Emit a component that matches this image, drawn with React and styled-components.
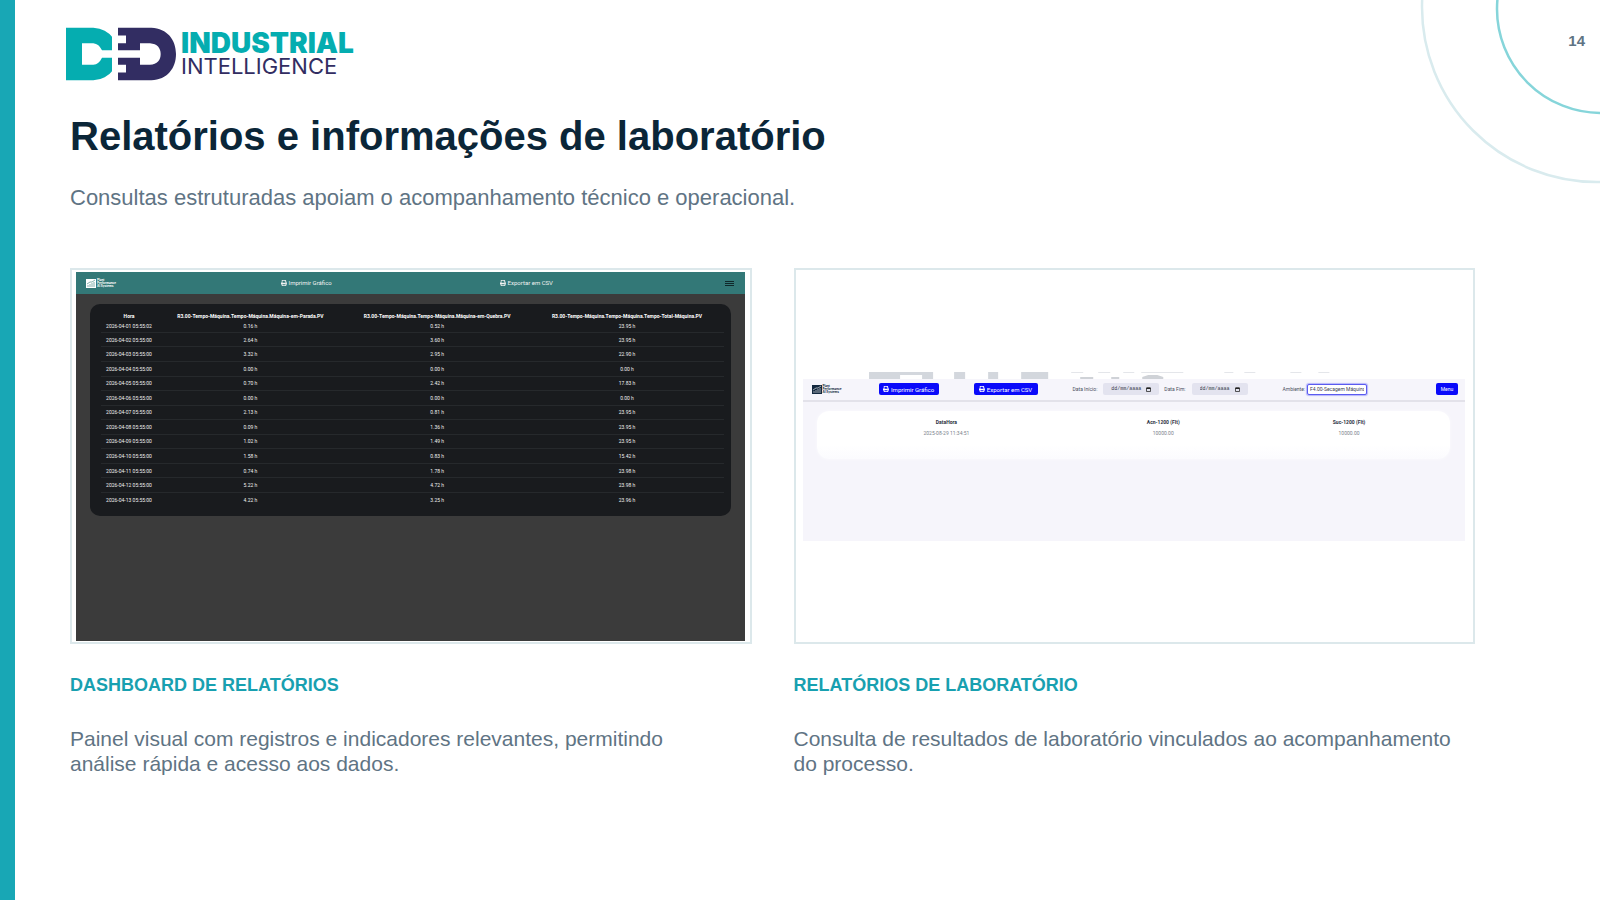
import React from "react"
import styled, { createGlobalStyle } from "styled-components";
import { FaPrint } from "react-icons/fa";

const GlobalStyle = createGlobalStyle`
  * {
    box-sizing: border-box;
  }
  body {
    margin: 0;
    background: #ffffff;
    font-family: "Liberation Sans", Arial, sans-serif;
  }
`;

const Slide = styled.main`
  position: relative;
  min-height: 100vh;
  overflow: hidden;
  border-left: 15px solid #18a7b5;
  padding: 24px 125px 40px 55px;
`;

const Rings = styled.svg`
  position: absolute;
  top: 0;
  right: 0;
  width: 184px;
  height: 188px;
`;

const PageNumber = styled.span`
  position: absolute;
  top: 32px;
  right: 15px;
  font-size: 15px;
  line-height: 18px;
  font-weight: 700;
  color: #5f7484;
`;

const Brand = styled.div`
  display: flex;
  align-items: center;
  height: 60px;
  margin-left: -4px;
  gap: 5px;
`;

const BrandMark = styled.svg`
  width: 110px;
  height: 54px;
`;

const BrandName = styled.div`
  display: flex;
  flex-direction: column;
  padding-top: 2px;
  font-family: Inter, sans-serif;
`;

const BrandTop = styled.span`
  font-size: 28px;
  line-height: 22px;
  font-weight: 900;
  color: #05adb0;
`;

const BrandBottom = styled.span`
  font-size: 22px;
  line-height: 24px;
  font-weight: 400;
  color: #322d62;
`;

const Title = styled.h1`
  margin: 28px 0 0;
  font-size: 40px;
  line-height: 48px;
  font-weight: 700;
  color: #0b2638;
`;

const Subtitle = styled.p`
  margin: 24px 0 0;
  font-size: 22px;
  line-height: 28px;
  color: #5f7484;
`;

const Cards = styled.div`
  display: grid;
  grid-template-columns: 1fr 1fr;
  gap: 42px;
  margin-top: 56px;
`;

const Frame = styled.div`
  display: flex;
  flex-direction: column;
  justify-content: center;
  height: 376px;
  padding: ${({ $inset }) => $inset};
  border: 2px solid #dce8eb;
  background: #ffffff;
`;

const CardTitle = styled.h2`
  margin: 30px 0 0;
  font-size: 18px;
  line-height: 22px;
  font-weight: 700;
  color: #18a0b0;
`;

const CardText = styled.p`
  margin: 30px 0 0;
  padding-right: 20px;
  font-size: 21px;
  line-height: 25px;
  color: #5f7484;
`;

/* dark dashboard */

const DarkScreen = styled.div`
  flex: 1;
  background: #3b3b3b;
  color: #f1f1f1;
  font-family: Roboto, sans-serif;
`;

const DarkBar = styled.div`
  display: grid;
  grid-template-columns: 17% 34% 34% 1fr;
  align-items: center;
  height: 22px;
  padding: 0 11px 0 10px;
  background: #337877;
`;

const DarkAction = styled.button`
  display: flex;
  align-items: center;
  justify-content: center;
  gap: 2px;
  padding: 0;
  border: 0;
  background: none;
  color: #f1f1f1;
  font-family: Roboto, sans-serif;
  font-size: 6px;
  line-height: 8px;
`;

const MenuButton = styled.button`
  display: flex;
  justify-self: end;
  padding: 0;
  border: 0;
  background: none;
`;

const DarkPanel = styled.div`
  margin: 10px 14px 0;
  padding: 7px 7px 9px 11px;
  border-radius: 10px;
  background: #191b1e;
`;

const DarkTable = styled.table`
  width: 100%;
  height: 196px;
  table-layout: fixed;
  border-collapse: collapse;
  font-size: 5px;
  line-height: 6px;
  text-align: center;

  th {
    height: 9px;
    padding: 0;
    font-weight: 700;
    color: #ffffff;
    white-space: nowrap;
  }
  td {
    height: 14px;
    padding: 0;
    border-bottom: 1px solid #26292c;
  }
  tr:first-child td {
    height: 12px;
  }
  tr:last-child td {
    border-bottom: 0;
  }
`;

/* light laboratory screen */

const LightScreen = styled.div`
  height: 162px;
  background: #f6f5fb;
  color: #4a5060;
  font-family: Roboto, sans-serif;
`;

const Remnant = styled.svg`
  display: block;
  width: 100%;
  height: 7px;
  background: #ffffff;
`;

const LightBar = styled.div`
  display: flex;
  align-items: center;
  height: 23px;
  padding: 0 7px 0 9px;
  border-bottom: 2px solid #e3e2ea;
`;

const Spacer = styled.div`
  flex: ${({ $grow }) => $grow};
`;

const BlueButton = styled.button`
  display: flex;
  align-items: center;
  justify-content: center;
  gap: 2px;
  width: ${({ $width }) => $width};
  height: 12px;
  padding: 0;
  border: 0;
  border-radius: 2px;
  background: #0a0afa;
  color: #ffffff;
  font-family: Roboto, sans-serif;
  font-size: ${({ $size }) => $size};
  white-space: nowrap;
`;

const Field = styled.label`
  display: flex;
  align-items: center;
  gap: ${({ $gap }) => $gap};
  font-size: 5px;
  white-space: nowrap;
`;

const DateBox = styled.span`
  display: flex;
  align-items: center;
  width: 56px;
  height: 12px;
  padding: 0 8px;
  border-radius: 2px;
  background: #e3e3ef;
`;

const DateInput = styled.input`
  flex: 1;
  min-width: 0;
  padding: 0;
  border: 0;
  background: none;
  color: #3c4250;
  font-family: "Liberation Mono", monospace;
  font-size: 5px;
`;

const RoomInput = styled.input`
  width: 60px;
  height: 11px;
  padding: 0 2px;
  border: 1px solid #5b5bf0;
  border-radius: 2px;
  box-shadow: 0 0 1px 1px #b5b5fa;
  background: #ffffff;
  color: #3c4250;
  font-family: Roboto, sans-serif;
  font-size: 5px;
`;

const LightPanel = styled.div`
  height: 48px;
  margin: 9px 15px 0 14px;
  padding: 6px 8px 0 6px;
  border-radius: 12px;
  background: linear-gradient(#ffffff 70%, #fbfbfe);
  box-shadow: 0 0 3px #fbfbfe;
`;

const LightTable = styled.table`
  width: 100%;
  table-layout: fixed;
  border-collapse: collapse;
  font-size: 5px;
  line-height: 6px;
  text-align: center;

  th,
  td {
    height: 11px;
    padding: 0;
  }
  th {
    font-weight: 700;
    color: #2b3040;
  }
  td {
    color: #7a7f8c;
  }
`;

const PlantLogoBox = styled.div`
  display: flex;
  align-items: center;
  gap: 1px;
  color: ${({ $color }) => $color};
  font-family: Inter, sans-serif;
  font-size: 3px;
  line-height: 3px;
  font-weight: 700;
`;

const columns = [
  "Hora",
  "R3.00-Tempo-Máquina.Tempo-Máquina.Máquina-em-Parada.PV",
  "R3.00-Tempo-Máquina.Tempo-Máquina.Máquina-em-Quebra.PV",
  "R3.00-Tempo-Máquina.Tempo-Máquina.Tempo-Total-Máquina.PV",
];

const rows = [
  ["2026-04-01 05:55:02", "0.16 h", "0.52 h", "23.95 h"],
  ["2026-04-02 05:55:00", "2.64 h", "3.60 h", "23.95 h"],
  ["2026-04-03 05:55:00", "3.32 h", "2.95 h", "22.90 h"],
  ["2026-04-04 05:55:00", "0.00 h", "0.00 h", "0.00 h"],
  ["2026-04-05 05:55:00", "0.70 h", "2.42 h", "17.83 h"],
  ["2026-04-06 05:55:00", "0.00 h", "0.00 h", "0.00 h"],
  ["2026-04-07 05:55:00", "2.13 h", "0.81 h", "23.95 h"],
  ["2026-04-08 05:55:00", "0.09 h", "1.36 h", "23.95 h"],
  ["2026-04-09 05:55:00", "1.02 h", "1.49 h", "23.95 h"],
  ["2026-04-10 05:55:00", "1.58 h", "0.83 h", "15.42 h"],
  ["2026-04-11 05:55:00", "0.74 h", "1.78 h", "23.98 h"],
  ["2026-04-12 05:55:00", "5.22 h", "4.72 h", "23.98 h"],
  ["2026-04-13 05:55:00", "4.22 h", "3.25 h", "23.96 h"],
];

const PlantLogo = ({ color, ink }) => (
  <PlantLogoBox $color={color}>
    <svg width="10" height="9" viewBox="0 0 10 9">
      <rect width="10" height="9" fill={color} />
      <path d="M2 8V6M4 8V5M6 8V4M8 8V3M1 5L4 3L6 3L9 1" stroke={ink} strokeWidth="0.6" fill="none" />
    </svg>
    <span>Plant<br />Performance<br />AI Systems</span>
  </PlantLogoBox>
);

const CalendarIcon = () => (
  <svg width="5" height="5" viewBox="0 0 10 10">
    <path d="M1 2H9V9H1Z" fill="none" stroke="#222" strokeWidth="1.5" />
    <path d="M1 1H9V4H1Z" fill="#222" />
  </svg>
);

const DashboardScreen = () => (
  <DarkScreen>
    <DarkBar>
      <PlantLogo color="#ffffff" ink="#337877" />
      <DarkAction type="button"><FaPrint />Imprimir Gráfico</DarkAction>
      <DarkAction type="button"><FaPrint />Exportar em CSV</DarkAction>
      <MenuButton type="button" aria-label="Menu">
        <svg width="9" height="5" viewBox="0 0 9 5">
          <path d="M0 0.5H9M0 2.5H9M0 4.5H9" stroke="#10282a" />
        </svg>
      </MenuButton>
    </DarkBar>
    <DarkPanel>
      <DarkTable>
        <colgroup>
          <col width="9%" />
          <col width="30%" />
          <col width="30%" />
          <col width="31%" />
        </colgroup>
        <thead>
          <tr>{columns.map((name) => <th key={name}>{name}</th>)}</tr>
        </thead>
        <tbody>
          {rows.map((row) => (
            <tr key={row[0]}>{row.map((cell, i) => <td key={i}>{cell}</td>)}</tr>
          ))}
        </tbody>
      </DarkTable>
    </DarkPanel>
  </DarkScreen>
);

const LaboratoryScreen = () => (
  <>
    <Remnant viewBox="0 0 662 7" preserveAspectRatio="none">
      <path d="M66 0H130V7H119V3H97V7H66ZM151 0H162V7H151ZM185 0H195V7H185ZM218 0H245V7H218Z" fill="#d3d7dd" />
      <path d="M268 0H280V1H268ZM295 0H307V1H295ZM320 0H331V1H320ZM338 0H380V1H338ZM421 0H430V1H421ZM441 0H452V1H441ZM487 0H498V1H487ZM515 0H526V1H515Z" fill="#e4e6ea" />
      <path d="M277 5H290V7H277ZM308 5H316V7H308ZM339 5L345 3H354L360 5V7H339Z" fill="#cfd2d7" />
    </Remnant>
    <LightScreen>
      <LightBar>
        <PlantLogo color="#14293f" ink="#ffffff" />
        <Spacer $grow={37} />
        <BlueButton type="button" $width="60px" $size="6px"><FaPrint />Imprimir Gráfico</BlueButton>
        <Spacer $grow={35} />
        <BlueButton type="button" $width="64px" $size="6px"><FaPrint />Exportar em CSV</BlueButton>
        <Spacer $grow={35} />
        <Field $gap="6px">
          Data Início:
          <DateBox><DateInput defaultValue="dd/mm/aaaa" /><CalendarIcon /></DateBox>
        </Field>
        <Spacer $grow={5} />
        <Field $gap="6px">
          Data Fim:
          <DateBox><DateInput defaultValue="dd/mm/aaaa" /><CalendarIcon /></DateBox>
        </Field>
        <Spacer $grow={35} />
        <Field $gap="2px">
          Ambiente:
          <RoomInput defaultValue="F4.00-Secagem Máquina" />
        </Field>
        <Spacer $grow={69} />
        <BlueButton type="button" $width="22px" $size="5px">Menu</BlueButton>
      </LightBar>
      <LightPanel>
        <LightTable>
          <colgroup>
            <col width="40%" />
            <col width="30%" />
            <col width="30%" />
          </colgroup>
          <thead>
            <tr>
              <th>DataHora</th>
              <th>Acn-1200 (FIt)</th>
              <th>Suc-1200 (FIt)</th>
            </tr>
          </thead>
          <tbody>
            <tr>
              <td>2025-08-29 11:34:51</td>
              <td>10000.00</td>
              <td>10000.00</td>
            </tr>
          </tbody>
        </LightTable>
      </LightPanel>
    </LightScreen>
  </>
);

const App = () => {
  return (
    <>
      <GlobalStyle />
      <Slide>
        <Rings viewBox="0 0 184 188" fill="none">
          <circle cx="181" cy="7" r="175" stroke="#d9ebee" strokeWidth="2.5" />
          <circle cx="185" cy="9" r="104" stroke="#86d5da" strokeWidth="2.5" />
        </Rings>
        <PageNumber>14</PageNumber>
        <Brand>
          <BrandMark viewBox="48 38 330 160" preserveAspectRatio="none">
            <path d="M48 40H130Q150 41 164 49Q180 58 186 67V107H156Q147 88 130 86H96V150H130Q147 148 156 129H186V169Q180 178 164 187Q150 195 130 196H48Z" fill="#05adb0" />
            <path d="M204 40H304C352 42 378 76 378 118C378 160 352 194 304 196H204V173H228V150H204V129H270V150H300C322 148 332 136 332 118C332 100 322 88 300 86H270V107H204V86H228V63H204Z" fill="#322d62" />
          </BrandMark>
          <BrandName>
            <BrandTop>INDUSTRIAL</BrandTop>
            <BrandBottom>INTELLIGENCE</BrandBottom>
          </BrandName>
        </Brand>
        <Title>Relatórios e informações de laboratório</Title>
        <Subtitle>Consultas estruturadas apoiam o acompanhamento técnico e operacional.</Subtitle>
        <Cards>
          <section>
            <Frame $inset="2px 5px 1px 4px">
              <DashboardScreen />
            </Frame>
            <CardTitle>DASHBOARD DE RELATÓRIOS</CardTitle>
            <CardText>Painel visual com registros e indicadores relevantes, permitindo análise rápida e acesso aos dados.</CardText>
          </section>
          <section>
            <Frame $inset="0 8px 0 7px">
              <LaboratoryScreen />
            </Frame>
            <CardTitle>RELATÓRIOS DE LABORATÓRIO</CardTitle>
            <CardText>Consulta de resultados de laboratório vinculados ao acompanhamento do processo.</CardText>
          </section>
        </Cards>
      </Slide>
    </>
  )
}

export default App
